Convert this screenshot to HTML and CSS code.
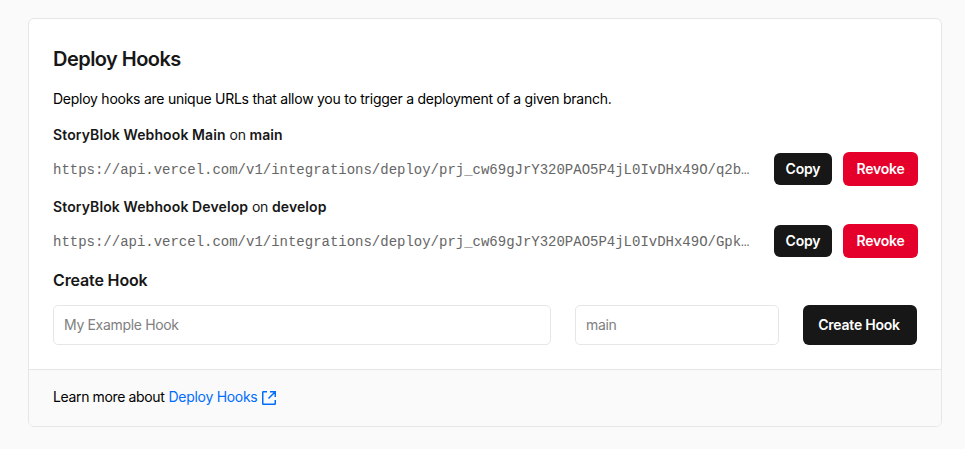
FILE: index.html
```html
<!DOCTYPE html>
<html lang="en">
<head>
<meta charset="utf-8">
<title>Deploy Hooks</title>
<link rel="stylesheet" href="styles.css">
</head>
<body>
<section class="card">
  <div class="content">
    <h2 class="title">Deploy Hooks</h2>
    <p class="description">Deploy hooks are unique URLs that allow you to trigger a deployment of a given branch.</p>
    <div class="hook">
      <p class="hook-name"><b>StoryBlok Webhook Main</b> on <b>main</b></p>
      <div class="hook-row">
        <code class="url">https://api.vercel.com/v1/integrations/deploy/prj_cw69gJrY320PAO5P4jL0IvDHx49O/q2b…</code>
        <button class="button copy"><span>Copy</span></button>
        <button class="button revoke"><span>Revoke</span></button>
      </div>
    </div>
    <div class="hook">
      <p class="hook-name"><b>StoryBlok Webhook Develop</b> on <b>develop</b></p>
      <div class="hook-row">
        <code class="url">https://api.vercel.com/v1/integrations/deploy/prj_cw69gJrY320PAO5P4jL0IvDHx49O/Gpk…</code>
        <button class="button copy"><span>Copy</span></button>
        <button class="button revoke"><span>Revoke</span></button>
      </div>
    </div>
    <h3 class="subtitle">Create Hook</h3>
    <form class="form">
      <input class="input" type="text" placeholder="My Example Hook">
      <input class="input branch" type="text" placeholder="main">
      <button class="button create" type="button"><span>Create Hook</span></button>
    </form>
  </div>
  <footer class="footer">
    <span class="learn">Learn more about</span>
    <a class="link" href="#">Deploy Hooks</a>
    <svg class="external" width="16" height="16" viewBox="0 0 16 16" fill="none" stroke="currentColor" stroke-width="1.5"><path d="M6 1.75H2.25a.5.5 0 0 0-.5.5v11.5a.5.5 0 0 0 .5.5h11.5a.5.5 0 0 0 .5-.5V10M9 1.75h5.25V7M14 2 7.5 8.5"/></svg>
  </footer>
</section>
</body>
</html>
```
FILE: styles.css
```css
* { box-sizing: border-box; }
body {
  margin: 0;
  padding: 18px 23px 22px 28px;
  background: #fafafa;
  color: #171717;
  font: 14px/24px Inter, sans-serif;
}
h2, h3, p { margin: 0; white-space: nowrap; }
.card {
  width: 914px;
  height: 409px;
  border: 1px solid #e6e6e6;
  border-radius: 6px;
  background: #fff;
  overflow: hidden;
}
.content { height: 350px; padding: 24px 23px 0 24px; }
.title { font-size: 20px; line-height: 32px; font-weight: 600; letter-spacing: -0.54px; }
.description { margin-top: 12px; color: #000; letter-spacing: -0.255px; }
.hook { height: 72px; }
.description + .hook { margin-top: 12px; }
.hook-name { letter-spacing: -0.2px; }
.hook-name b { font-weight: 600; letter-spacing: 0.11px; }
.hook-row { display: flex; align-items: center; height: 34px; margin-top: 5px; }
.url {
  flex: 1;
  padding-top: 2px;
  overflow: hidden;
  white-space: nowrap;
  color: #666;
  font: 14px/24px "Liberation Mono", monospace;
  letter-spacing: -0.01px;
}
.button {
  flex: none;
  padding: 0;
  border: 0;
  border-radius: 6px;
  background: #171717;
  color: #fff;
  font: 600 14px/20px Inter, sans-serif;
  white-space: nowrap;
}
.copy { width: 58px; height: 32px; margin-right: 11px; letter-spacing: -0.2px; }
.revoke { width: 75px; height: 34px; background: #e5002b; letter-spacing: -0.2px; }
.subtitle { margin-top: 1px; font-size: 16px; line-height: 24px; font-weight: 600; letter-spacing: -0.14px; }
.form { display: flex; gap: 24px; margin-top: 13px; }
.input {
  width: 498px;
  height: 40px;
  padding: 0 10px 1px;
  border: 1px solid #e6e6e6;
  border-radius: 5px;
  background: #fff;
  font: 14px/20px Inter, sans-serif;
  letter-spacing: -0.33px;
}
.input::placeholder { color: #808080; opacity: 1; }
.branch { width: 204px; }
.create { width: 114px; height: 40px; padding-right: 2px; letter-spacing: -0.23px; }
.footer {
  display: flex;
  align-items: center;
  height: 57px;
  padding: 0 24px 2px;
  border-top: 1px solid #e6e6e6;
  background: #fafafa;
  white-space: nowrap;
}
.learn { color: #000; margin-right: 4px; letter-spacing: -0.36px; }
.link { color: #006dff; text-decoration: none; letter-spacing: -0.29px; }
.external { margin: 2px 0 0 4px; color: #006dff; }
```
